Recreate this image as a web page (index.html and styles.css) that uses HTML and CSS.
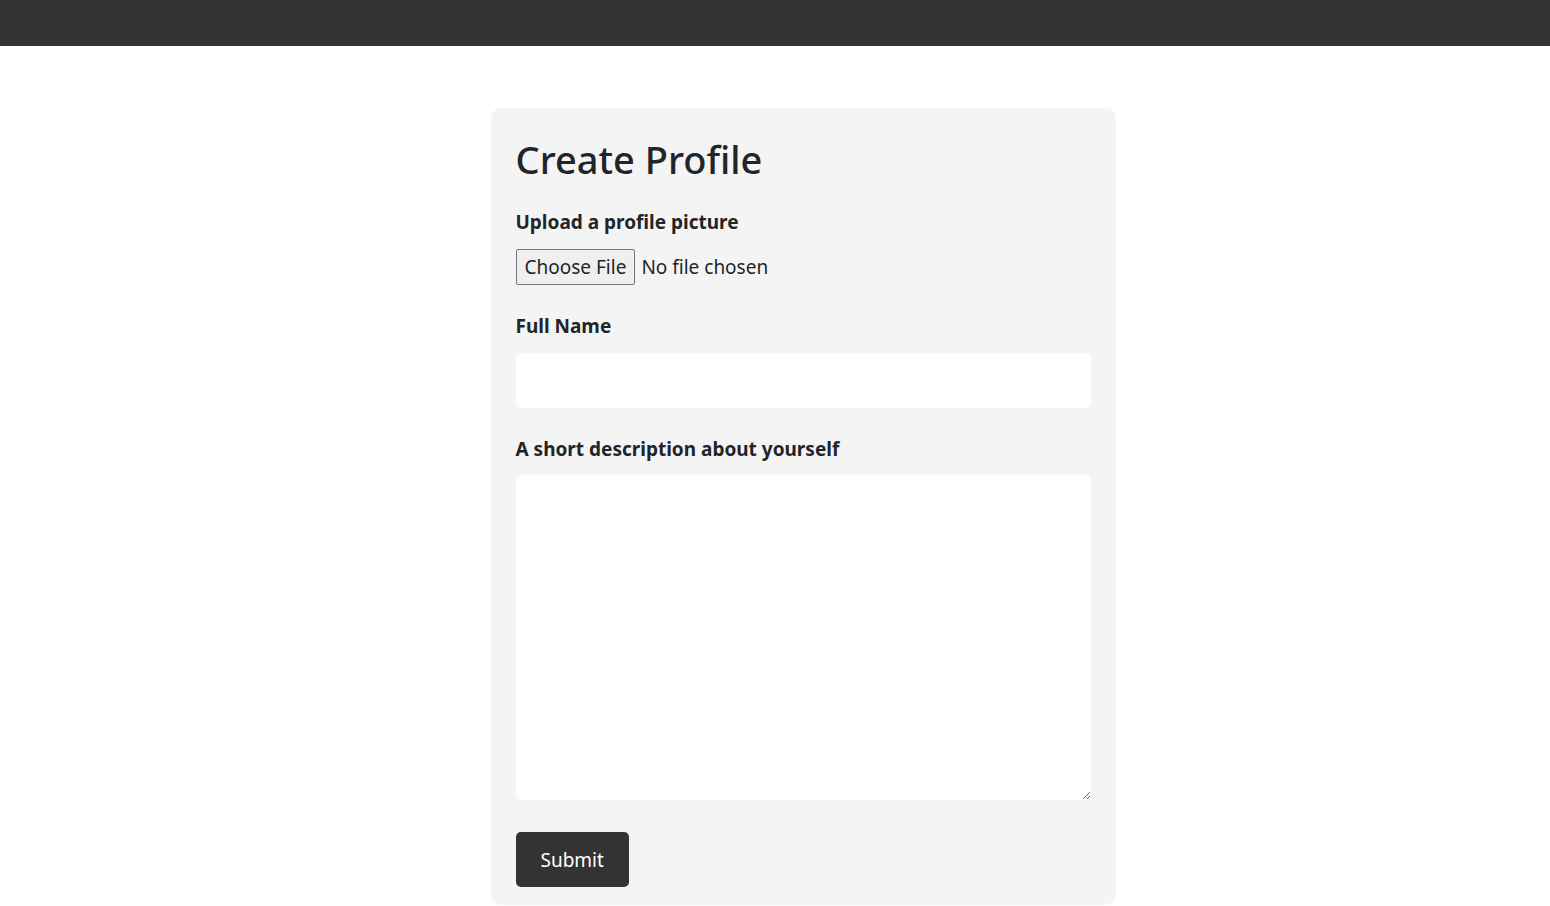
FILE: index.html
```html
<!DOCTYPE html>
<html lang="en">
<head>
<meta charset="utf-8">
<title>Create Profile</title>
<link rel="stylesheet" href="styles.css">
</head>
<body>
<header class="topbar"></header>
<main class="page">
  <form class="card">
    <h1 class="title">Create Profile</h1>
    <div class="field">
      <label class="label" for="pic">Upload a profile picture</label>
      <input class="file" type="file" id="pic">
    </div>
    <div class="field">
      <label class="label" for="name">Full Name</label>
      <input class="text-input" type="text" id="name">
    </div>
    <div class="field field-last">
      <label class="label" for="desc">A short description about yourself</label>
      <textarea class="textarea" id="desc"></textarea>
    </div>
    <button class="submit" type="button">Submit</button>
  </form>
</main>
</body>
</html>
```

FILE: styles.css
```css
html, body {
  margin: 0;
  padding: 0;
  background: #ffffff;
  font-family: "Noto Sans", "Open Sans", sans-serif;
  color: #212529;
}

.topbar {
  height: 46px;
  background: #333333;
}

.page {
  display: flex;
  justify-content: center;
  padding-top: 62px;
  padding-left: 56px;
}

.card {
  box-sizing: border-box;
  width: 625px;
  background: #f4f4f4;
  border-radius: 10px;
  padding: 25px 25px 18px;
  display: flex;
  flex-direction: column;
  align-items: flex-start;
}

.title {
  font-size: 38px;
  font-weight: 500;
  line-height: 52px;
  margin: 0 0 22px;
}

.field {
  display: flex;
  flex-direction: column;
  align-items: flex-start;
  width: 100%;
  margin-bottom: 26px;
}

.field-last {
  margin-bottom: 32px;
}

.label {
  font-size: 19px;
  font-weight: 700;
  line-height: 30px;
  margin-bottom: 12px;
}

.field-last .label {
  margin-bottom: 11px;
}

.file {
  font-family: inherit;
  font-size: 19px;
  line-height: 26px;
  color: #212529;
}

.file::file-selector-button {
  font-family: inherit;
  font-size: 19px;
  line-height: 26px;
  height: 36px;
  padding: 0 8px;
  margin-right: 6px;
  border: 1px solid #767676;
  border-radius: 2px;
  background: #efefef;
  color: #212529;
}

.text-input,
.textarea {
  box-sizing: border-box;
  width: 100%;
  border: none;
  border-radius: 5px;
  background: #ffffff;
  font-family: inherit;
  font-size: 19px;
  padding: 10px;
}

.text-input {
  height: 55px;
}

.textarea {
  height: 325px;
  resize: vertical;
}

.submit {
  height: 55px;
  padding: 0 25px;
  background: #333333;
  color: #ffffff;
  border: none;
  border-radius: 5px;
  font-family: inherit;
  font-size: 19px;
}
```
